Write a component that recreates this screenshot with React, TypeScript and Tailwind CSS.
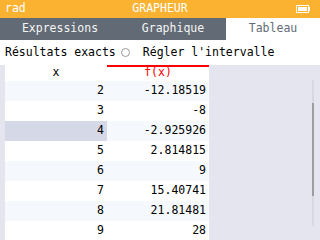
const rows = [
  { x: "2", y: "-12.18519" },
  { x: "3", y: "-8" },
  { x: "4", y: "-2.925926", selected: true },
  { x: "5", y: "2.814815" },
  { x: "6", y: "9" },
  { x: "7", y: "15.40741" },
  { x: "8", y: "21.81481" },
  { x: "9", y: "28" },
];

export default function App() {
  return (
    <div className="w-[320px] h-[240px] overflow-hidden bg-white text-[11.5px] leading-none text-black font-['DejaVu_Sans_Mono','Liberation_Mono',monospace]">
      {/* status bar */}
      <div className="h-[18px] bg-[#fbb231] text-white flex items-center px-[5px] relative">
        <span>rad</span>
        <span className="absolute left-0 right-0 text-center">GRAPHEUR</span>
        <div className="ml-auto flex items-center mr-[5px]">
          <div className="w-[13px] h-[8px] border border-white p-[1px]">
            <div className="w-full h-full bg-white" />
          </div>
          <div className="w-[1px] h-[4px] bg-white" />
        </div>
      </div>

      {/* tabs */}
      <div className="h-[22px] flex bg-[#626b75] text-[#f5f5f5]">
        <div className="w-[120px] flex items-center justify-center">Expressions</div>
        <div className="w-[106px] flex items-center justify-center">Graphique</div>
        <div className="flex-1 flex items-center justify-center bg-white text-[#626b75]">Tableau</div>
      </div>

      {/* options */}
      <div className="h-[25px] flex items-center pl-[5px]">
        <span>Résultats exacts</span>
        <span className="ml-[5px] w-[9px] h-[9px] rounded-full border border-[#9a9a9a]" />
        <span className="ml-[13px]">Régler l'intervalle</span>
      </div>

      {/* table area */}
      <div className="flex h-[175px] bg-[#e4e5ef]">
        <div className="w-[204px] ml-[5px] flex flex-col">
          <div className="h-[21px] flex bg-white">
            <div className="w-[102px] flex items-center justify-center">x</div>
            <div className="w-[102px] flex items-center justify-center text-[#ff0000] border-t-2 border-[#ff0000] pb-[2px]">f(x)</div>
          </div>
          {rows.map((r, i) => (
            <div key={r.x} className={`h-[20px] flex shrink-0 ${i % 2 === 0 ? "bg-[#f5f8fd]" : "bg-white"}`}>
              <div className={`w-[102px] flex items-center justify-end pr-[3px] ${r.selected ? "bg-[#d5d8e6]" : ""}`}>{r.x}</div>
              <div className="w-[102px] flex items-center justify-end pr-[3px]">{r.y}</div>
            </div>
          ))}
        </div>
        <div className="flex-1 relative">
          <div className="absolute left-[103px] top-[15px] w-[2px] h-[146px] bg-[#d8d8e0]">
            <div className="mt-[23px] h-[93px] bg-[#9d9d9d]" />
          </div>
        </div>
      </div>
    </div>
  );
}
